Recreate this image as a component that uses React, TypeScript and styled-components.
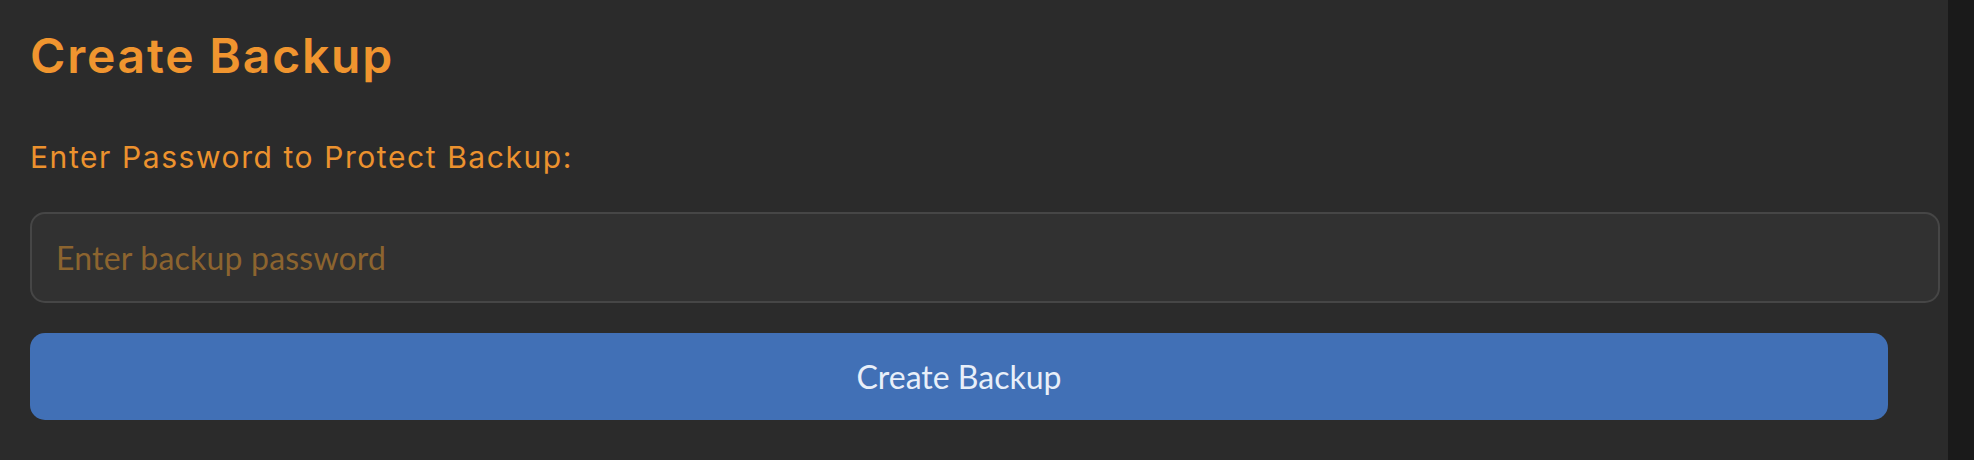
import React from "react";
import styled, { createGlobalStyle } from "styled-components";

const GlobalStyle = createGlobalStyle`
  html, body {
    margin: 0;
    padding: 0;
    background: #2b2b2b;
  }
  body {
    font-family: "Lato", "Noto Sans", sans-serif;
  }
  * {
    box-sizing: border-box;
  }
`;

const Screen = styled.div`
  display: flex;
  width: 1974px;
  height: 460px;
  background: #2b2b2b;
  overflow: hidden;
`;

const Panel = styled.section`
  flex: 1;
  display: flex;
  flex-direction: column;
  padding: 0 60px 0 30px;
  min-width: 0;
`;

const Title = styled.h2`
  margin: 32px 0 0;
  font-family: "Inter", "Open Sans", sans-serif;
  font-weight: 600;
  font-size: 48px;
  line-height: 48px;
  letter-spacing: 1.8px;
  color: #f0952f;
`;

const Label = styled.label`
  display: block;
  margin: 61px 0 0;
  font-family: "Inter", "Open Sans", sans-serif;
  font-weight: 400;
  font-size: 30px;
  line-height: 32px;
  letter-spacing: 1.58px;
  color: #ec922e;
`;

const PasswordInput = styled.input`
  box-sizing: content-box;
  display: block;
  width: 100%;
  height: 87px;
  margin: 39px 0 0;
  padding: 0 24px;
  border: 2px solid #464646;
  border-radius: 15px;
  background: #313131;
  color: #f0f0f0;
  font-family: "Lato", "Noto Sans", sans-serif;
  font-size: 32px;
  letter-spacing: 0.2px;
  outline: none;

  &::placeholder {
    color: #8c642f;
    opacity: 1;
  }
`;

const PrimaryButton = styled.button`
  display: block;
  width: 100%;
  height: 87px;
  margin: 30px 0 0;
  border: none;
  border-radius: 15px;
  background: #4170b6;
  color: #e8eff9;
  font-family: "Lato", "Noto Sans", sans-serif;
  font-size: 32px;
  font-weight: 400;
  cursor: pointer;
`;

const ScrollTrack = styled.div`
  width: 26px;
  flex: 0 0 26px;
  background: #1a1a1a;
`;

export default function App() {
  return (
    <>
      <GlobalStyle />
      <Screen>
        <Panel>
          <Title>Create Backup</Title>
          <Label htmlFor="backup-password">Enter Password to Protect Backup:</Label>
          <PasswordInput
            id="backup-password"
            type="password"
            placeholder="Enter backup password"
          />
          <PrimaryButton type="button">Create Backup</PrimaryButton>
        </Panel>
        <ScrollTrack />
      </Screen>
    </>
  );
}
